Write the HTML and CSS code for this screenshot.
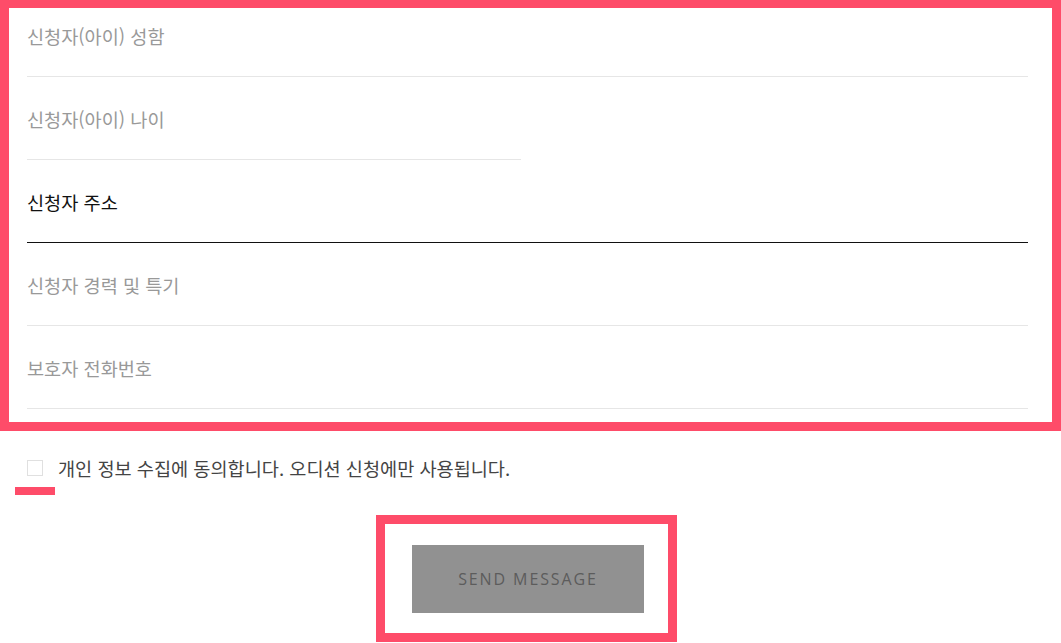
FILE: index.html
```html
<!DOCTYPE html>
<html lang="ko">
<head>
    <meta charset="UTF-8">
    <meta name="viewport" content="width=device-width, initial-scale=1.0">
    <title>오디션 신청</title>
    <link rel="stylesheet" href="styles.css">
</head>
<body>
    <form class="apply-form">
        <div class="fields-frame">
            <input class="field first" type="text" placeholder="신청자(아이) 성함">
            <input class="field half" type="text" placeholder="신청자(아이) 나이">
            <input class="field active" type="text" placeholder="신청자 주소">
            <input class="field" type="text" placeholder="신청자 경력 및 특기">
            <input class="field" type="tel" placeholder="보호자 전화번호">
        </div>

        <label class="agree">
            <span class="agree-box"></span>
            <span class="agree-text">개인 정보 수집에 동의합니다. 오디션 신청에만 사용됩니다.</span>
        </label>
        <div class="agree-mark"></div>

        <div class="submit-frame">
            <button type="button" class="submit-btn">SEND MESSAGE</button>
        </div>
    </form>
</body>
</html>
```

FILE: styles.css
```css
:root {
    --mark-color: #fe4c69;
    --line-color: #e6e6e6;
    --placeholder-color: #999999;
    --text-color: #444444;
}

* {
    margin: 0;
    padding: 0;
    box-sizing: border-box;
}

body {
    font-family: "Noto Sans CJK KR", "Noto Sans", sans-serif;
    background-color: white;
    overflow: hidden;
}

.apply-form {
    display: flex;
    flex-direction: column;
}

.fields-frame {
    display: flex;
    flex-direction: column;
    border: 9px solid var(--mark-color);
    border-top-width: 8px;
    padding: 0 24px 13px 18px;
}

.field {
    display: block;
    width: 100%;
    border: none;
    border-bottom: 1px solid var(--line-color);
    padding: 29px 0 29px;
    font-family: inherit;
    font-size: 18.6px;
    line-height: 24px;
    height: 83px;
    color: #111;
    background: transparent;
    outline: none;
}

.field::placeholder {
    color: var(--placeholder-color);
}

.field.first {
    padding-top: 16px;
    height: 69px;
}

.field.half {
    width: 494px;
}

.field.active {
    border-bottom-color: #111;
}

.field.active::placeholder {
    color: #111;
}

.agree {
    display: flex;
    align-items: center;
    gap: 15px;
    margin: 29px 0 0 27px;
    cursor: pointer;
}

.agree-box {
    width: 16px;
    height: 16px;
    border: 1px solid #e0e0e0;
    background: white;
}

.agree-text {
    font-size: 18.6px;
    line-height: 16px;
    color: var(--text-color);
}

.agree-mark {
    width: 40px;
    height: 8px;
    margin: 11px 0 0 15px;
    background: var(--mark-color);
}

.submit-frame {
    display: flex;
    align-self: flex-start;
    margin: 20px 0 0 376px;
    padding: 21px 24px 20px 27px;
    border: 9px solid var(--mark-color);
}

.submit-btn {
    width: 232px;
    height: 68px;
    border: none;
    background-color: #919191;
    color: #5c5c5c;
    font-family: "Open Sans", sans-serif;
    font-size: 16px;
    letter-spacing: 1.9px;
    cursor: pointer;
}
```
